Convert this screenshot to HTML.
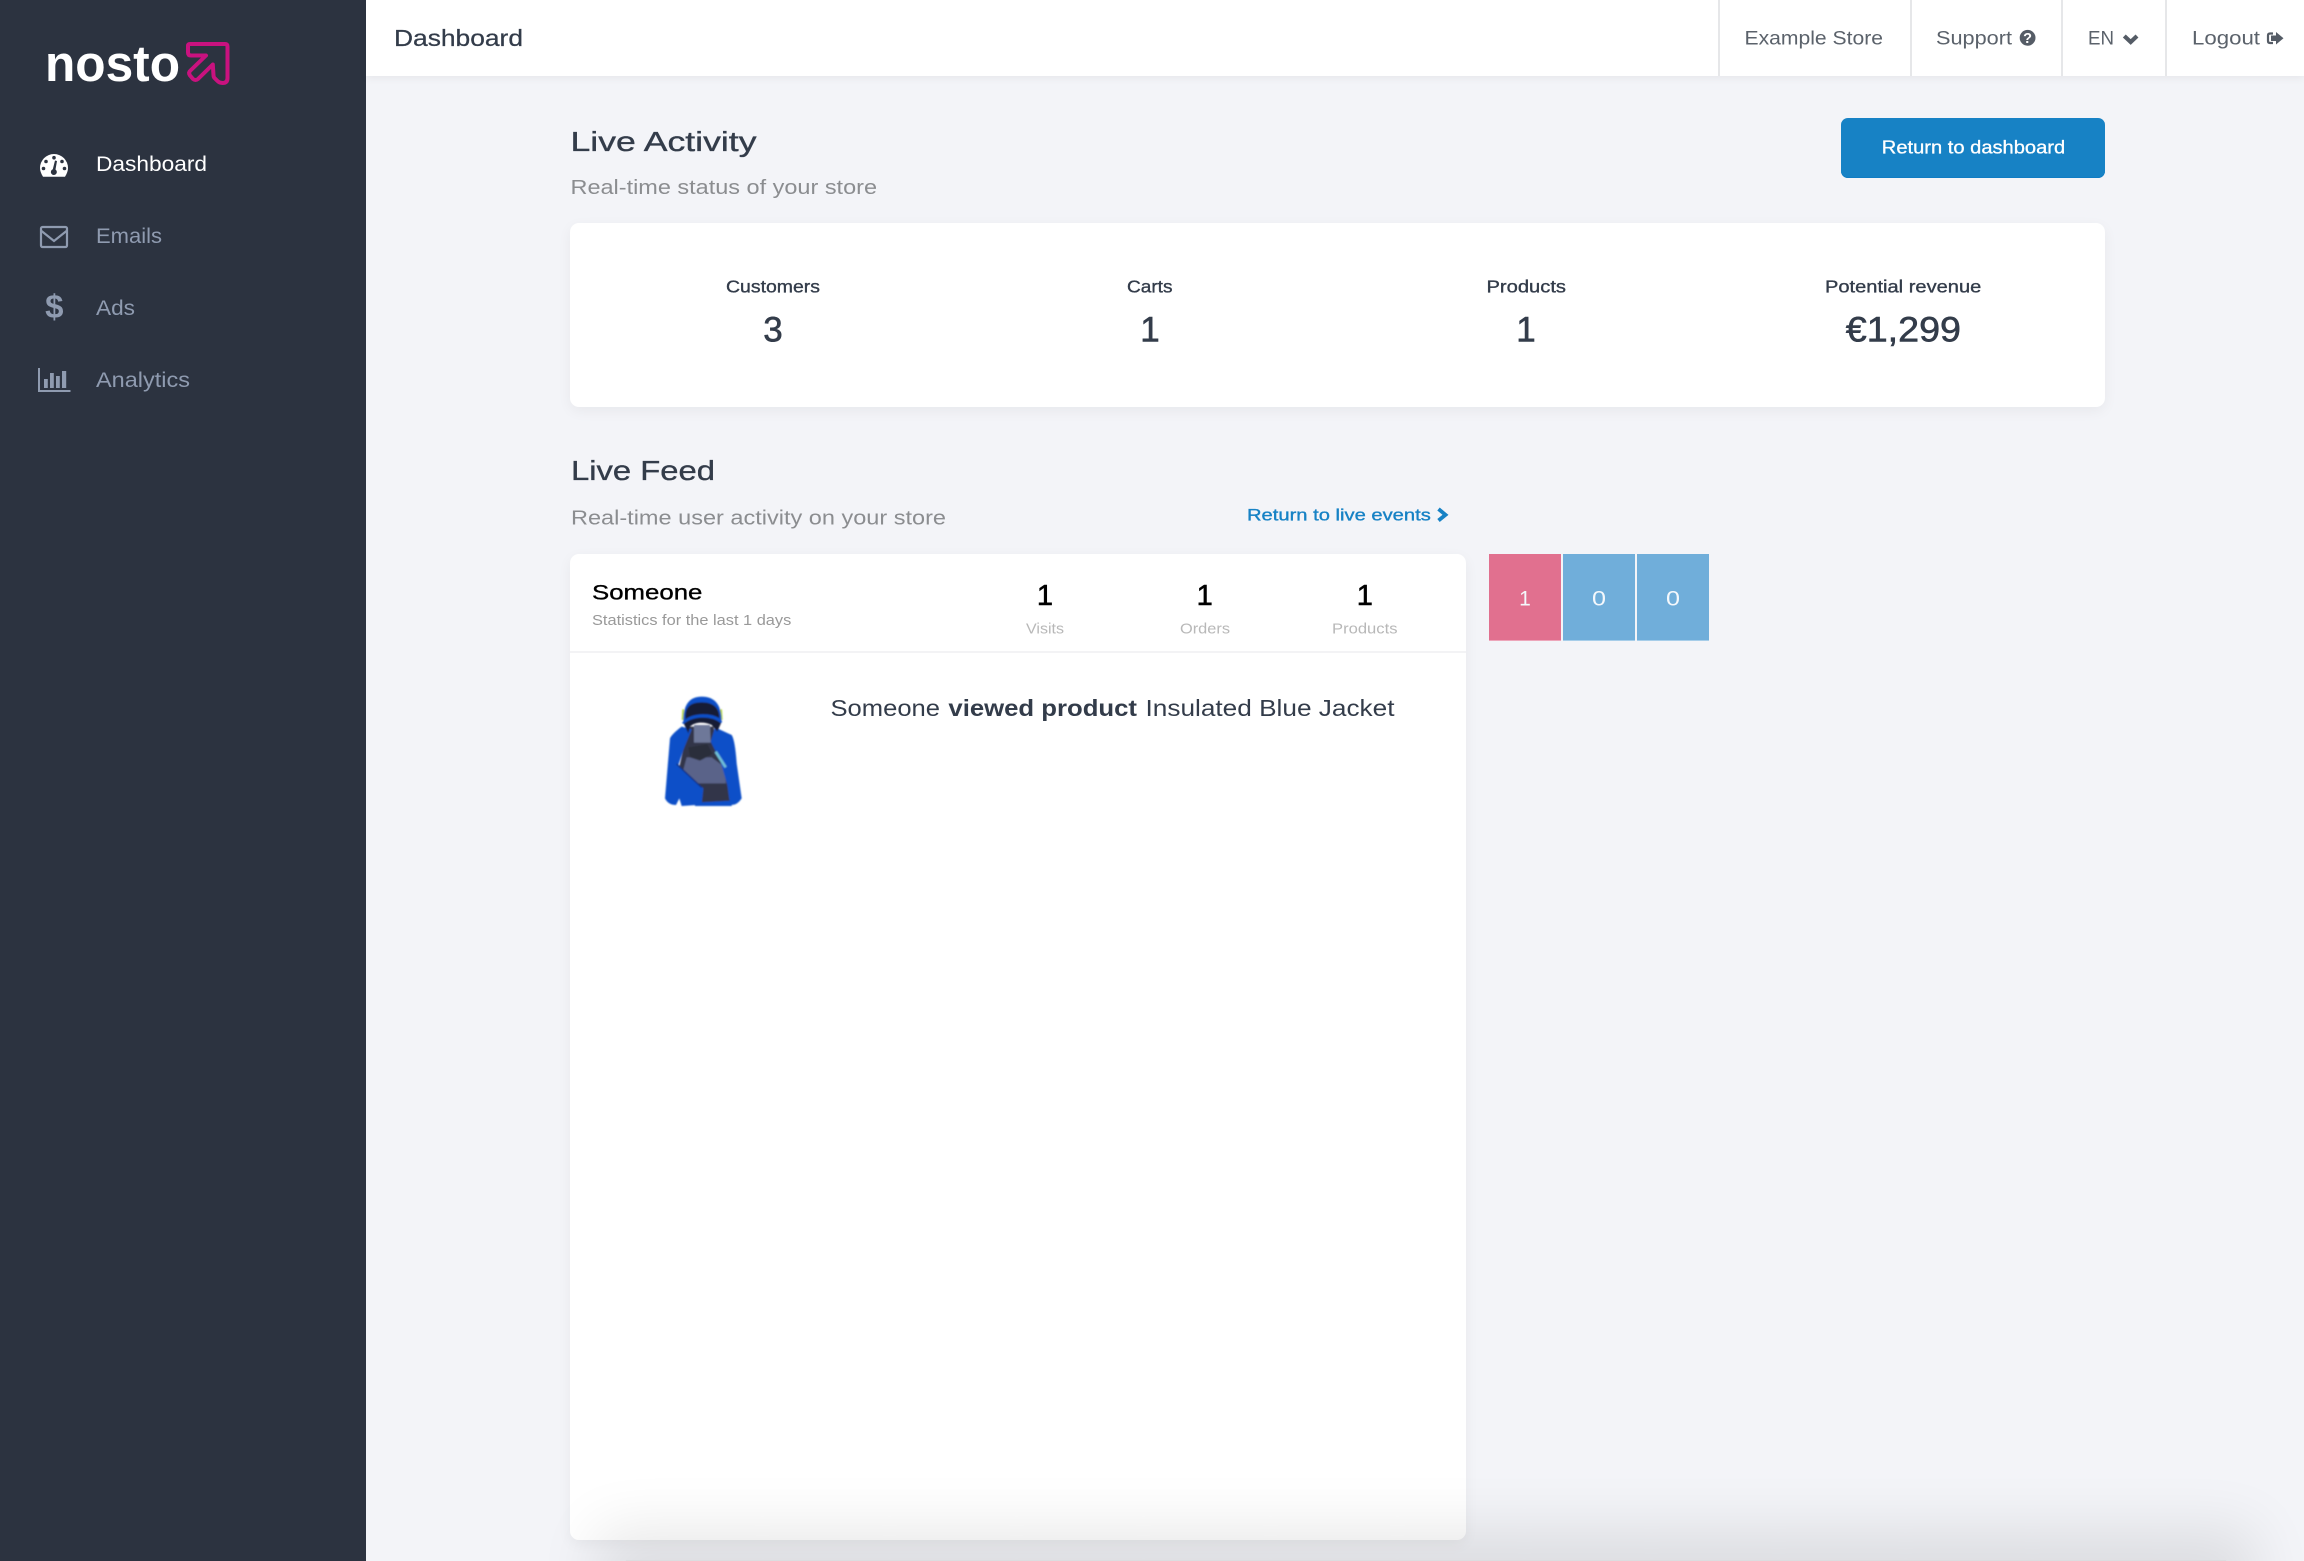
<!DOCTYPE html>
<html lang="en">
<head>
<meta charset="utf-8">
<title>Nosto Dashboard</title>
<style>
html,body{margin:0;padding:0;width:2304px;height:1561px;overflow:hidden;background:#f3f4f8;font-family:"Liberation Sans",sans-serif}
#page{position:relative;width:2304px;height:1561px;overflow:hidden;background:#f3f4f8}
.a{position:absolute;display:block}
#side{left:0;top:0;width:366px;height:1561px;background:#2c3340}
#top{left:366px;top:0;width:1938px;height:76px;background:#fff;box-shadow:0 2px 8px rgba(0,0,0,.06)}
.dv{top:0;width:2px;height:76px;background:#e6e7e9}
#btn{left:1841px;top:118px;width:264px;height:60px;border-radius:7px;background:#1782c5;box-shadow:inset 0 -1px 0 #0f7cc4}
.card{background:#fff;border-radius:9px;box-shadow:0 4px 14px rgba(0,0,0,.05)}
#stats{left:570px;top:223px;width:1535px;height:184px}
#feed{left:570px;top:554px;width:896px;height:986px}
#sep{left:570px;top:651px;width:896px;height:2px;background:#f3f3f5}
.sq{top:554px;width:72px;height:87px;box-sizing:border-box}
#foot{left:657px;top:1560px;width:1538px;height:1px;box-shadow:0 29px 60px 60px rgba(0,0,0,.095)}
#line{left:626px;top:1560px;width:1600px;height:1px;background:#dcdde0}
svg{position:absolute;left:0;top:0;display:block}
text{font-family:"Liberation Sans",sans-serif}
</style>
</head>
<body>
<div id="page">
<div class="a" id="side"></div>
<div class="a" id="top"></div>
<div class="a dv" style="left:1718px"></div>
<div class="a dv" style="left:1910px"></div>
<div class="a dv" style="left:2061px"></div>
<div class="a dv" style="left:2165px"></div>
<div class="a" id="btn"></div>
<div class="a card" id="stats"></div>
<div class="a card" id="feed"></div>
<div class="a" id="sep"></div>
<div class="a sq" style="left:1489px;background:#e1708f;border-bottom:1px solid #eda6ba"></div>
<div class="a sq" style="left:1563px;background:#70aeda;border-bottom:1px solid #a6cde9"></div>
<div class="a sq" style="left:1637px;background:#70aeda;border-bottom:1px solid #a6cde9"></div>
<div class="a" id="foot"></div>
<div class="a" id="line"></div>

<svg width="2304" height="1561" viewBox="0 0 2304 1561" xmlns="http://www.w3.org/2000/svg">
<defs><filter id="bl" x="-10%" y="-10%" width="120%" height="120%"><feGaussianBlur stdDeviation="2.2"/></filter></defs>

<!-- logo -->
<text x="45" y="81" font-size="51" font-weight="bold" fill="#fff" textLength="135" lengthAdjust="spacingAndGlyphs">nosto</text>
<path d="M190 44H225Q227.500 44 227.500 46.500V78Q227.500 83 222.500 83Q219.500 83 217.500 81L214.500 78Q213.500 77 213.500 75L212.800 64.500L198 79Q195.500 81 193 79L190 75.500Q188 72.500 190.500 70.500L206 55.500H191Q188 55.500 188 52.500V46Q188 44 190 44Z" fill="none" stroke="#c9127f" stroke-width="4" stroke-linejoin="round"/>

<!-- sidebar nav -->
<path d="M43 176.700C41 173.500 40 170.500 40 168A14 14 0 0 1 68 168C68 170.500 67 173.500 65 176.700Z" fill="#fff"/>
<g fill="#2c3340">
<circle cx="54" cy="157.700" r="1.800"/><circle cx="46" cy="161.500" r="1.800"/><circle cx="62" cy="161.500" r="1.800"/>
<circle cx="43.500" cy="168.500" r="1.800"/><circle cx="64.500" cy="168.500" r="1.800"/>
<path d="M55 160.500L57 161L55.500 169.500A3 3 0 1 1 52.800 169.200Z"/>
</g>
<text x="96" y="171" font-size="21" fill="#fff" textLength="111" lengthAdjust="spacingAndGlyphs">Dashboard</text>

<rect x="41" y="227" width="26" height="20" rx="1.500" fill="none" stroke="#8f9bb0" stroke-width="2.200"/>
<path d="M41.500 231L54 241L66.500 231" fill="none" stroke="#8f9bb0" stroke-width="2.200"/>
<text x="96" y="243" font-size="21" fill="#8f9bb0" textLength="66" lengthAdjust="spacingAndGlyphs">Emails</text>

<text x="54.300" y="318" font-size="33" font-weight="bold" text-anchor="middle" fill="#8f9bb0">$</text>
<text x="96" y="315" font-size="21" fill="#8f9bb0" textLength="39" lengthAdjust="spacingAndGlyphs">Ads</text>

<path d="M39 368V391H70.500" fill="none" stroke="#8f9bb0" stroke-width="2"/>
<g fill="#8f9bb0"><rect x="44" y="379" width="3.800" height="9"/><rect x="50" y="373" width="3.800" height="15"/><rect x="56" y="376" width="3.800" height="12"/><rect x="62" y="371" width="4.200" height="17"/></g>
<text x="96" y="387" font-size="21" fill="#8f9bb0" textLength="94" lengthAdjust="spacingAndGlyphs">Analytics</text>

<!-- top bar -->
<g fill="#333c4a" stroke="#333c4a" stroke-width=".25">
<text x="394" y="46" font-size="23.500" textLength="129" lengthAdjust="spacingAndGlyphs">Dashboard</text>
</g>
<g fill="#5b626b" font-size="19.500">
<text x="1744.500" y="44.300" textLength="138.500" lengthAdjust="spacingAndGlyphs">Example Store</text>
<text x="1936" y="44.300" textLength="76" lengthAdjust="spacingAndGlyphs">Support</text>
<text x="2088" y="44.300" textLength="26" lengthAdjust="spacingAndGlyphs">EN</text>
<text x="2192" y="44.300" textLength="68" lengthAdjust="spacingAndGlyphs">Logout</text>
</g>
<circle cx="2027.600" cy="37.800" r="7.900" fill="#555c66"/>
<text x="2027.600" y="43.200" font-size="14.500" font-weight="bold" text-anchor="middle" fill="#fff">?</text>
<path d="M2124.300 36L2130.700 42L2137 36" fill="none" stroke="#555c66" stroke-width="4.200"/>
<path d="M2273 33.500H2270Q2268 33.500 2268 35.500V41Q2268 43 2270 43H2273" fill="none" stroke="#555c66" stroke-width="2.200"/>
<path d="M2271 35.500H2276V32L2283.500 38.200L2276 44.500V41H2271Z" fill="#555c66"/>

<!-- button -->
<text x="1881.800" y="153.300" font-size="18" fill="#fff" stroke="#fff" stroke-width=".3" textLength="183.400" lengthAdjust="spacingAndGlyphs">Return to dashboard</text>

<!-- live activity -->
<g fill="#333c4a" stroke="#333c4a" stroke-width=".35">
<text x="570.500" y="151" font-size="28" textLength="186" lengthAdjust="spacingAndGlyphs">Live Activity</text>
<text x="571" y="480" font-size="28" textLength="144" lengthAdjust="spacingAndGlyphs">Live Feed</text>
<text x="726" y="292.300" font-size="17.500" textLength="94" lengthAdjust="spacingAndGlyphs">Customers</text>
<text x="1127" y="292.300" font-size="17.500" textLength="45.500" lengthAdjust="spacingAndGlyphs">Carts</text>
<text x="1486.500" y="292.300" font-size="17.500" textLength="79.500" lengthAdjust="spacingAndGlyphs">Products</text>
<text x="1825" y="292.300" font-size="17.500" textLength="156.300" lengthAdjust="spacingAndGlyphs">Potential revenue</text>
</g>
<g fill="#333c4a" stroke="#333c4a" stroke-width=".6">
<text x="773" y="341.700" font-size="35" text-anchor="middle">3</text>
<text x="1150" y="341.700" font-size="35" text-anchor="middle">1</text>
<text x="1526" y="341.700" font-size="35" text-anchor="middle">1</text>
<text x="1845.800" y="341.700" font-size="35" textLength="115.200" lengthAdjust="spacingAndGlyphs">€1,299</text>
</g>
<g fill="#8b8d90" font-size="20">
<text x="570.500" y="194" textLength="306.500" lengthAdjust="spacingAndGlyphs">Real-time status of your store</text>
<text x="571" y="524.300" textLength="375" lengthAdjust="spacingAndGlyphs">Real-time user activity on your store</text>
</g>
<text x="1247" y="520.700" font-size="16.500" fill="#1782c5" stroke="#1782c5" stroke-width=".35" textLength="183.800" lengthAdjust="spacingAndGlyphs">Return to live events</text>
<path d="M1438.500 509L1445.500 514.800L1438.500 520.500" fill="none" stroke="#1782c5" stroke-width="3.800"/>

<!-- feed header -->
<g fill="#000" stroke="#000" stroke-width=".35">
<text x="592" y="599.300" font-size="21.500" textLength="110.400" lengthAdjust="spacingAndGlyphs">Someone</text>
</g>
<g fill="#000" stroke="#000" stroke-width=".6">
<text x="1045" y="605" font-size="29" text-anchor="middle">1</text>
<text x="1204.700" y="605" font-size="29" text-anchor="middle">1</text>
<text x="1364.800" y="605" font-size="29" text-anchor="middle">1</text>
</g>
<text x="592" y="625" font-size="14.500" fill="#999" textLength="199.300" lengthAdjust="spacingAndGlyphs">Statistics for the last 1 days</text>
<g fill="#b8b8b8" font-size="15">
<text x="1026" y="633.300" textLength="38" lengthAdjust="spacingAndGlyphs">Visits</text>
<text x="1180" y="633.300" textLength="50" lengthAdjust="spacingAndGlyphs">Orders</text>
<text x="1332" y="633.300" textLength="65.500" lengthAdjust="spacingAndGlyphs">Products</text>
</g>

<!-- jacket -->
<g transform="translate(620 670) scale(.33333)" filter="url(#bl)">
<path d="M205 170L280 170L300 240L330 340L335 398L190 400L178 290Z" fill="#33364a"/>
<path d="M200 262L275 262L312 290L318 340L215 340L190 300Z" fill="#5a6389"/>
<path d="M205 232L262 222L278 252L240 272L210 262Z" fill="#2b2d3b"/>
<path d="M222 165L270 165L272 218L222 218Z" fill="#6e7899"/>
<path d="M185 170C165 185 155 195 150 205L135 385Q145 405 168 405L178 385L185 408L245 404L250 355L175 285L190 240L215 178Z" fill="#0f4fc8"/>
<path d="M285 172L335 195Q345 210 350 280L365 385Q352 405 335 405L328 388L322 345L300 270L272 215Z" fill="#0f4fc8"/>
<path d="M225 398L335 392L335 408L225 408Z" fill="#0f4fc8"/>
<path d="M190 118L188 150M303 118L305 150" stroke="#b8d93a" stroke-width="6" fill="none"/>
<path d="M190 160C188 100 212 80 245 80C285 80 305 105 305 155C285 135 215 135 190 160Z" fill="#0f4fc8"/>
<path d="M197 148C192 112 212 96 245 97C280 96 300 115 298 145C275 128 220 128 197 148Z" fill="#181c36"/>
<path d="M190 158C220 133 275 133 305 155L292 185L275 165C255 155 225 155 210 170L205 190Z" fill="#181c36"/>
<path d="M188 160C220 133 275 133 305 157" stroke="#0f4fc8" stroke-width="6" fill="none"/>
<path d="M287 245L317 292" stroke="#6fc0d8" stroke-width="8" fill="none"/>
<path d="M170 282L245 352" stroke="#0a2f80" stroke-width="4" fill="none"/>
</g>

<!-- event -->
<g fill="#333c4a" font-size="23">
<text x="830.500" y="716" textLength="109.500" lengthAdjust="spacingAndGlyphs">Someone</text>
<text x="948.400" y="716" font-weight="bold" textLength="188.600" lengthAdjust="spacingAndGlyphs">viewed product</text>
<text x="1145.500" y="716" textLength="249" lengthAdjust="spacingAndGlyphs">Insulated Blue Jacket</text>
</g>

<!-- squares -->
<g fill="#f4f8fc" font-size="21" text-anchor="middle">
<text x="1525" y="605.300">1</text>
<text x="1599" y="605.300" textLength="14" lengthAdjust="spacingAndGlyphs">0</text>
<text x="1673" y="605.300" textLength="14" lengthAdjust="spacingAndGlyphs">0</text>
</g>
</svg>
</div>
</body>
</html>
